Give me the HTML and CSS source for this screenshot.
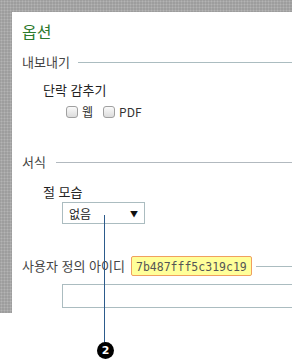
FILE: index.html
```html
<!DOCTYPE html>
<html lang="ko">
<head>
    <meta charset="UTF-8">
    <title>옵션</title>
    <link rel="stylesheet" href="styles.css">
</head>
<body>
    <div class="frame">
        <div class="panel">
            <h1 class="title">옵션</h1>

            <div class="section">
                <span class="section-label">내보내기</span>
                <span class="rule"></span>
            </div>
            <div class="field-label">단락 감추기</div>
            <div class="checks">
                <label class="check"><input type="checkbox"> 웹</label>
                <label class="check"><input type="checkbox"> PDF</label>
            </div>

            <div class="section section-format">
                <span class="section-label">서식</span>
                <span class="rule"></span>
            </div>
            <div class="field-label field-shape">절 모습</div>
            <div class="select">
                <span>없음</span>
                <span class="arrow">▼</span>
            </div>

            <div class="section section-id">
                <span class="section-label">사용자 정의 아이디</span>
                <span class="id-badge">7b487fff5c319c19</span>
                <span class="rule"></span>
            </div>
            <div class="text-input"></div>
        </div>
    </div>

    <div class="callout-line"></div>
    <div class="callout">2</div>
</body>
</html>
```

FILE: styles.css
```css
body {
    margin: 0;
    background-color: #fff;
    font-family: "Noto Sans CJK KR", "Noto Sans", sans-serif;
    color: #333;
    position: relative;
    height: 360px;
    overflow: hidden;
}

.frame {
    height: 313px;
    padding: 12px 0 0 12px;
    box-sizing: border-box;
    background-color: #9d9d9d;
    background-image: radial-gradient(circle, #b4b4b4 0.8px, transparent 1.2px);
    background-size: 3px 3px;
}

.panel {
    height: 100%;
    background-color: #fff;
    padding: 9px 0 0 10px;
    box-sizing: border-box;
}

.title {
    margin: 0;
    font-size: 16px;
    font-weight: normal;
    line-height: 20px;
    color: #2d7a2d;
}

.section {
    display: flex;
    align-items: center;
    margin-top: 12px;
    height: 18px;
}

.section-label {
    font-size: 13px;
    color: #444;
    line-height: 18px;
}

.rule {
    flex: 1;
    height: 1px;
    margin-left: 8px;
    background-color: #abbcc0;
}

.field-label {
    margin: 10px 0 0 21px;
    font-size: 13px;
    line-height: 18px;
    color: #222;
}

.checks {
    display: flex;
    gap: 10px;
    margin: 5px 0 0 44px;
    font-size: 12px;
    line-height: 16px;
    color: #333;
}

.check {
    display: flex;
    align-items: center;
    gap: 4px;
}

.check input {
    appearance: none;
    margin: 0;
    width: 12px;
    height: 12px;
    border: 1px solid #a0a0a0;
    border-radius: 3px;
    background: linear-gradient(#fafafa, #dcdcdc);
}

.section-format {
    margin-top: 33px;
}

.section-format .rule {
    margin-left: 10px;
    background-color: #b2b9bf;
}

.field-shape {
    margin-top: 12px;
}

.select {
    display: flex;
    justify-content: space-between;
    align-items: center;
    width: 83px;
    height: 22px;
    margin: 1px 0 0 40px;
    padding: 0 6px 0 6px;
    box-sizing: border-box;
    border: 1px solid #abbcc0;
    font-size: 12px;
    color: #222;
}

.arrow {
    font-size: 8px;
    color: #111;
}

.section-id {
    margin-top: 32px;
    height: 20px;
}

.id-badge {
    margin-left: 6px;
    padding: 0 4px;
    height: 20px;
    line-height: 20px;
    box-sizing: border-box;
    background-color: #ffff99;
    border: 1px solid #f0a060;
    border-radius: 2px;
    font-family: "DejaVu Sans Mono", monospace;
    font-size: 11.5px;
    color: #555;
}

.id-badge + .rule {
    margin-left: 4px;
}

.text-input {
    height: 22px;
    margin: 8px 0 0 40px;
    border: 1px solid #abbcc0;
    border-right: none;
}

.callout-line {
    position: absolute;
    left: 104px;
    top: 215px;
    width: 1px;
    height: 130px;
    background-color: #2c5b8c;
}

.callout {
    position: absolute;
    left: 97px;
    top: 342px;
    width: 17px;
    height: 17px;
    border-radius: 50%;
    background-color: #000;
    color: #fff;
    font-family: "DejaVu Sans", sans-serif;
    font-weight: bold;
    font-size: 11px;
    line-height: 17px;
    text-align: center;
}
```
